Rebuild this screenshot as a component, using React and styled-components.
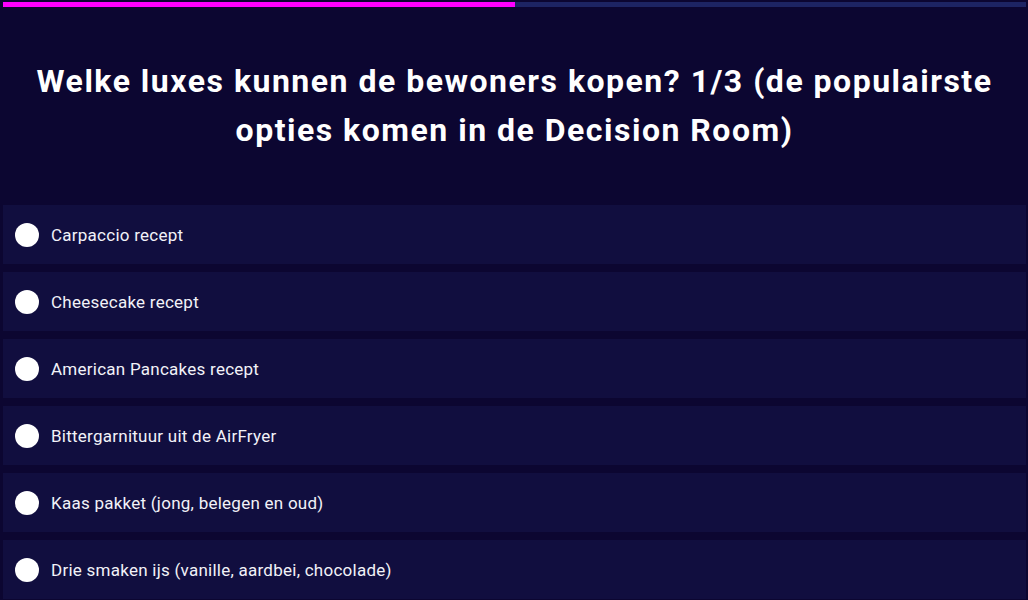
import React from "react";
import styled, { createGlobalStyle } from "styled-components";

const Global = createGlobalStyle`
  html, body { margin: 0; padding: 0; background: #0c0631; }
  body { font-family: Roboto, "Liberation Sans", sans-serif; color: #ffffff; }
`;

const Page = styled.div`
  width: 1028px;
  height: 600px;
  box-sizing: border-box;
  padding: 2px 2px 0 3px;
  display: flex;
  flex-direction: column;
  overflow: hidden;
`;

const Progress = styled.div`
  height: 5px;
  background: #1d2463;
  display: flex;
`;

const ProgressFill = styled.div`
  height: 100%;
  background: #ff00ff;
`;

const Title = styled.h1`
  margin: 0;
  padding: 50px 20px 0;
  height: 143px;
  box-sizing: border-box;
  text-align: center;
  font-size: 32px;
  line-height: 49px;
  font-weight: 700;
  letter-spacing: 1.5px;
`;

const Options = styled.div`
  display: flex;
  flex-direction: column;
  gap: 8px;
  margin-top: 55px;
`;

const Option = styled.label`
  height: 59px;
  background: #110e3f;
  display: flex;
  align-items: center;
  padding-left: 12px;
  gap: 12px;
  font-size: 17px;
  letter-spacing: 0.25px;
  color: #f2f2f8;
  cursor: pointer;
`;

const Radio = styled.span`
  width: 24px;
  height: 24px;
  border-radius: 50%;
  background: #ffffff;
  flex: none;
`;

const options = [
  "Carpaccio recept",
  "Cheesecake recept",
  "American Pancakes recept",
  "Bittergarnituur uit de AirFryer",
  "Kaas pakket (jong, belegen en oud)",
  "Drie smaken ijs (vanille, aardbei, chocolade)",
];

export default function App() {
  const progress = 512 / 1023;
  return (
    <>
      <Global />
      <Page>
        <Progress>
          <ProgressFill style={{ width: `${progress * 100}%` }} />
        </Progress>
        <Title>
          Welke luxes kunnen de bewoners kopen? 1/3 (de populairste opties komen in de Decision Room)
        </Title>
        <Options>
          {options.map((o) => (
            <Option key={o}>
              <Radio />
              {o}
            </Option>
          ))}
        </Options>
      </Page>
    </>
  );
}
